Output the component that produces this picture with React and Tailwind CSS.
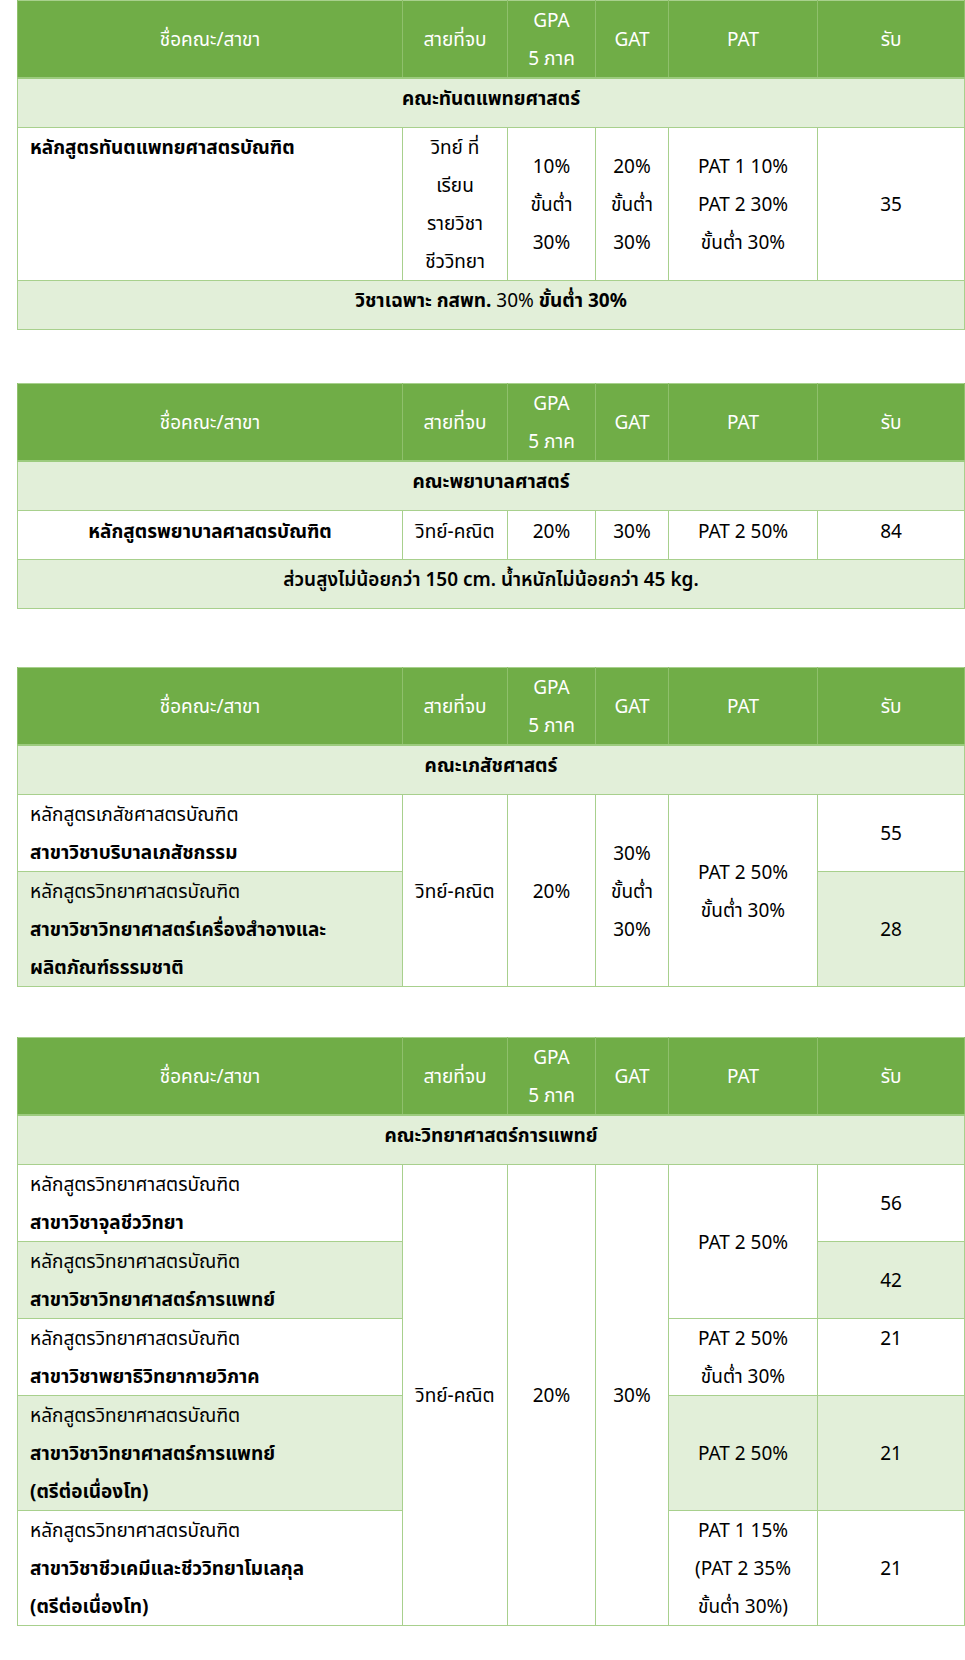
import React from "react";

const font = {
  fontFamily: '"Noto Sans", "Noto Sans Thai", "Leelawadee UI", Tahoma, sans-serif',
};

const th =
  "border-x border-[#8fc06c] bg-[#70ad47] text-white font-normal text-center align-middle px-2";
const td = "border border-[#a8d08d] px-3 align-middle text-center";
const pale = "bg-[#e2efd9]";
const one = "pt-0 pb-[10px]";

const Cols = () => (
  <colgroup>
    <col className="w-[385px]" />
    <col className="w-[105px]" />
    <col className="w-[88px]" />
    <col className="w-[73px]" />
    <col className="w-[149px]" />
    <col className="w-[147px]" />
  </colgroup>
);

const Head = () => (
  <thead>
    <tr className="border-b-2 border-[#9ccb7e]">
      <th className={th}>ชื่อคณะ/สาขา</th>
      <th className={th}>สายที่จบ</th>
      <th className={th}>
        GPA
        <br />5 ภาค
      </th>
      <th className={th}>GAT</th>
      <th className={th}>PAT</th>
      <th className={th}>รับ</th>
    </tr>
  </thead>
);

const Faculty = ({ name }) => (
  <tr>
    <td colSpan={6} className={`${td} ${pale} ${one} font-bold`}>
      {name}
    </td>
  </tr>
);

const Course = ({ lines, bg = "" }) => (
  <td className={`${td} ${bg} text-left align-top`}>
    <div>{lines[0]}</div>
    {lines.slice(1).map((l, i) => (
      <div key={i} className="font-bold">
        {l}
      </div>
    ))}
  </td>
);

const Table = ({ children, className = "" }) => (
  <table
    className={`ml-[17px] w-[947px] table-fixed border-collapse border border-[#a8d08d] ${className}`}
  >
    <Cols />
    <Head />
    <tbody>{children}</tbody>
  </table>
);

export default function App() {
  return (
    <div
      className="w-[965px] min-h-[1660px] bg-white text-[19px] leading-[38px] text-black"
      style={font}
    >
      <Table>
        <Faculty name="คณะทันตแพทยศาสตร์" />
        <tr>
          <td className={`${td} text-left align-top font-bold`}>
            หลักสูตรทันตแพทยศาสตรบัณฑิต
          </td>
          <td className={`${td} px-1`}>
            วิทย์ ที่
            <br />
            เรียน
            <br />
            รายวิชา
            <br />
            ชีววิทยา
          </td>
          <td className={`${td} px-1`}>
            10%
            <br />
            ขั้นต่ำ
            <br />
            30%
          </td>
          <td className={`${td} px-1`}>
            20%
            <br />
            ขั้นต่ำ
            <br />
            30%
          </td>
          <td className={td}>
            PAT 1 10%
            <br />
            PAT 2 30%
            <br />
            ขั้นต่ำ 30%
          </td>
          <td className={td}>35</td>
        </tr>
        <tr>
          <td colSpan={6} className={`${td} ${pale} ${one}`}>
            <span className="font-bold">วิชาเฉพาะ กสพท.</span> 30%{" "}
            <span className="font-bold">ขั้นต่ำ 30%</span>
          </td>
        </tr>
      </Table>

      <Table className="mt-[53px]">
        <Faculty name="คณะพยาบาลศาสตร์" />
        <tr>
          <td className={`${td} pt-px pb-[9px] font-bold`}>
            หลักสูตรพยาบาลศาสตรบัณฑิต
          </td>
          <td className={`${td} pt-px pb-[9px] px-1`}>วิทย์-คณิต</td>
          <td className={`${td} pt-px pb-[9px]`}>20%</td>
          <td className={`${td} pt-px pb-[9px]`}>30%</td>
          <td className={`${td} pt-px pb-[9px]`}>PAT 2 50%</td>
          <td className={`${td} pt-px pb-[9px]`}>84</td>
        </tr>
        <tr>
          <td colSpan={6} className={`${td} ${pale} ${one} font-semibold`}>
            ส่วนสูงไม่น้อยกว่า 150 cm. น้ำหนักไม่น้อยกว่า 45 kg.
          </td>
        </tr>
      </Table>

      <Table className="mt-[58px]">
        <Faculty name="คณะเภสัชศาสตร์" />
        <tr>
          <Course
            lines={["หลักสูตรเภสัชศาสตรบัณฑิต", "สาขาวิชาบริบาลเภสัชกรรม"]}
          />
          <td rowSpan={2} className={`${td} px-1`}>
            วิทย์-คณิต
          </td>
          <td rowSpan={2} className={td}>
            20%
          </td>
          <td rowSpan={2} className={`${td} px-1`}>
            30%
            <br />
            ขั้นต่ำ
            <br />
            30%
          </td>
          <td rowSpan={2} className={td}>
            PAT 2 50%
            <br />
            ขั้นต่ำ 30%
          </td>
          <td className={td}>55</td>
        </tr>
        <tr>
          <Course
            bg={pale}
            lines={[
              "หลักสูตรวิทยาศาสตรบัณฑิต",
              "สาขาวิชาวิทยาศาสตร์เครื่องสำอางและ",
              "ผลิตภัณฑ์ธรรมชาติ",
            ]}
          />
          <td className={`${td} ${pale}`}>28</td>
        </tr>
      </Table>

      <Table className="mt-[50px]">
        <Faculty name="คณะวิทยาศาสตร์การแพทย์" />
        <tr>
          <Course lines={["หลักสูตรวิทยาศาสตรบัณฑิต", "สาขาวิชาจุลชีววิทยา"]} />
          <td rowSpan={5} className={`${td} px-1`}>
            วิทย์-คณิต
          </td>
          <td rowSpan={5} className={td}>
            20%
          </td>
          <td rowSpan={5} className={td}>
            30%
          </td>
          <td rowSpan={2} className={td}>
            PAT 2 50%
          </td>
          <td className={td}>56</td>
        </tr>
        <tr>
          <Course
            bg={pale}
            lines={["หลักสูตรวิทยาศาสตรบัณฑิต", "สาขาวิชาวิทยาศาสตร์การแพทย์"]}
          />
          <td className={`${td} ${pale}`}>42</td>
        </tr>
        <tr>
          <Course
            lines={["หลักสูตรวิทยาศาสตรบัณฑิต", "สาขาวิชาพยาธิวิทยากายวิภาค"]}
          />
          <td className={td}>
            PAT 2 50%
            <br />
            ขั้นต่ำ 30%
          </td>
          <td className={`${td} align-top`}>21</td>
        </tr>
        <tr>
          <Course
            bg={pale}
            lines={[
              "หลักสูตรวิทยาศาสตรบัณฑิต",
              "สาขาวิชาวิทยาศาสตร์การแพทย์",
              "(ตรีต่อเนื่องโท)",
            ]}
          />
          <td className={`${td} ${pale}`}>PAT 2 50%</td>
          <td className={`${td} ${pale}`}>21</td>
        </tr>
        <tr>
          <Course
            lines={[
              "หลักสูตรวิทยาศาสตรบัณฑิต",
              "สาขาวิชาชีวเคมีและชีววิทยาโมเลกุล",
              "(ตรีต่อเนื่องโท)",
            ]}
          />
          <td className={`${td} px-1`}>
            PAT 1 15%
            <br />
            (PAT 2 35%
            <br />
            ขั้นต่ำ 30%)
          </td>
          <td className={td}>21</td>
        </tr>
      </Table>
    </div>
  );
}
